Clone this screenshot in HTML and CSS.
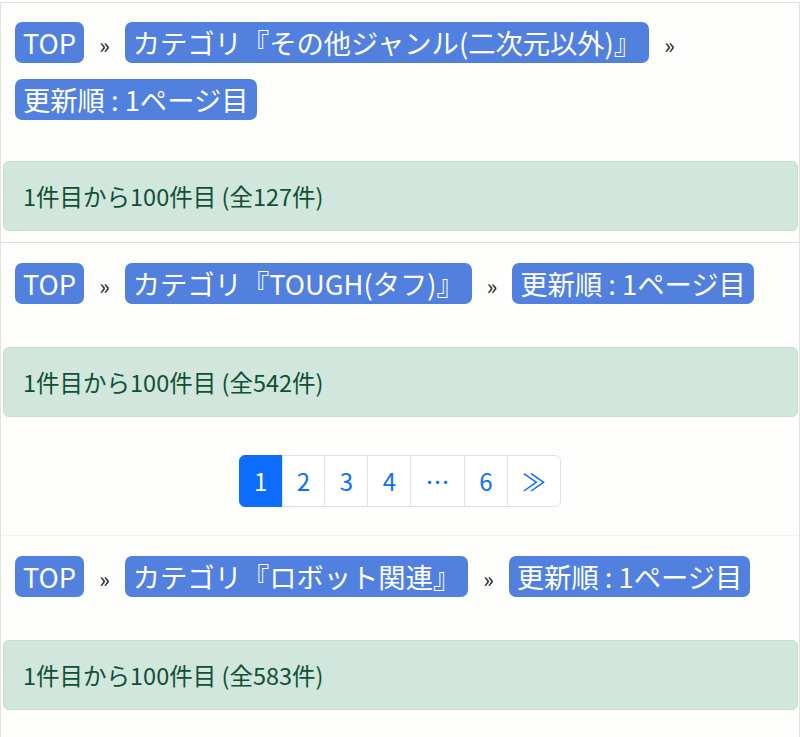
FILE: index.html
```html
<!DOCTYPE html>
<html lang="ja">
<head>
<meta charset="utf-8">
<link rel="stylesheet" href="styles.css">
</head>
<body>
<div class="wrap">
  <section class="sec">
    <nav class="crumbs">
      <a class="badge">TOP</a><span class="sep">»</span><a class="badge">カテゴリ『その他ジャンル(二次元以外)』</a><span class="sep">»</span><a class="badge">更新順 : 1ページ目</a>
    </nav>
    <div class="alert">1件目から100件目 (全127件)</div>
  </section>
  <section class="sec">
    <nav class="crumbs">
      <a class="badge">TOP</a><span class="sep">»</span><a class="badge">カテゴリ『TOUGH(タフ)』</a><span class="sep">»</span><a class="badge">更新順 : 1ページ目</a>
    </nav>
    <div class="alert">1件目から100件目 (全542件)</div>
    <ul class="pager">
      <li class="pg active">1</li>
      <li class="pg">2</li>
      <li class="pg">3</li>
      <li class="pg">4</li>
      <li class="pg">…</li>
      <li class="pg">6</li>
      <li class="pg">≫</li>
    </ul>
  </section>
  <section class="sec sec-faint">
    <nav class="crumbs">
      <a class="badge">TOP</a><span class="sep">»</span><a class="badge">カテゴリ『ロボット関連』</a><span class="sep">»</span><a class="badge">更新順 : 1ページ目</a>
    </nav>
    <div class="alert">1件目から100件目 (全583件)</div>
  </section>
</div>
</body>
</html>
```

FILE: styles.css
```css
html, body {
  margin: 0;
  padding: 0;
  background: #fdfdfc;
  font-family: "Noto Sans CJK JP", "Noto Sans", sans-serif;
}
.wrap {
  margin-top: 2px;
  border: 1px solid #e2e2e2;
  border-bottom: none;
  min-height: 740px;
}
.sec {
  border-top: 1px solid #dcdcdc;
  padding-top: 20px;
}
.sec:first-child {
  border-top: none;
  padding-top: 19px;
}
.sec-faint {
  border-top-color: #f1f1f0;
}
.crumbs {
  display: flex;
  flex-wrap: wrap;
  align-items: baseline;
  row-gap: 14px;
  padding: 0 14px;
}
.badge {
  display: inline-block;
  background: #5180de;
  color: #fff;
  font-size: 27.3px;
  line-height: 41px;
  padding: 0 8px;
  border-radius: 7px;
  white-space: nowrap;
}
.sep {
  font-size: 22px;
  line-height: 42px;
  color: #222;
  margin: 0 15px;
}
.alert {
  margin: 41px 1px 11px 2px;
  background: #d1e7dd;
  border: 1px solid #c3dfd2;
  border-radius: 6px;
  color: #0f5132;
  font-size: 23.5px;
  line-height: 34px;
  padding: 17px 19px;
}
.pager {
  list-style: none;
  display: flex;
  justify-content: center;
  margin: 38px 0 28px;
  padding: 0;
}
.pg {
  font-size: 24px;
  line-height: 36px;
  padding: 7px 14.3px;
  border: 1px solid #dee2e6;
  margin-left: -1px;
  color: #0d6efd;
  background: #fff;
}
.pg:first-child {
  border-radius: 6px 0 0 6px;
  margin-left: 0;
}
.pg:last-child {
  border-radius: 0 6px 6px 0;
}
.pg.active {
  background: #0d6efd;
  border-color: #0d6efd;
  color: #fff;
}
```
